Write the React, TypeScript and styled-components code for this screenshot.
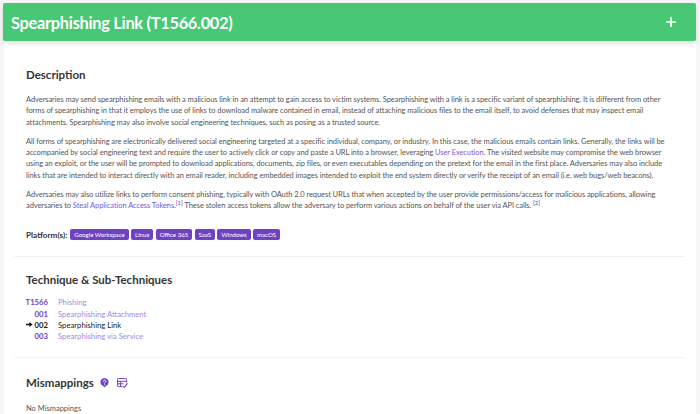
import styled, { createGlobalStyle } from "styled-components";

const GlobalStyle = createGlobalStyle`
  html, body {
    margin: 0;
    padding: 0;
    background: #f7f7f8;
    font-family: "Lato", "Open Sans", sans-serif;
  }
`;

const platforms = ["Google Workspace", "Linux", "Office 365", "SaaS", "Windows", "macOS"];

const techniques = [
  { id: "T1566", name: "Phishing", parent: true },
  { id: "001", name: "Spearphishing Attachment" },
  { id: "002", name: "Spearphishing Link", current: true },
  { id: "003", name: "Spearphishing via Service" },
];

const App = () => {
  return (
    <Page>
      <GlobalStyle />
      <Banner>
        <Title>Spearphishing Link (T1566.002)</Title>
        <PlusIcon viewBox="0 0 12 12">
          <path d="M6 1v10M1 6h10" stroke="#fff" strokeWidth="1.7" fill="none" />
        </PlusIcon>
      </Banner>
      <Card>
        <Section>
          <Heading>Description</Heading>
          <Para>
            Adversaries may send spearphishing emails with a malicious link in an attempt to gain access to victim systems. Spearphishing with a link is a specific variant of spearphishing. It is different from other<br />
            forms of spearphishing in that it employs the use of links to download malware contained in email, instead of attaching malicious files to the email itself, to avoid defenses that may inspect email<br />
            attachments. Spearphishing may also involve social engineering techniques, such as posing as a trusted source.
          </Para>
          <Para>
            All forms of spearphishing are electronically delivered social engineering targeted at a specific individual, company, or industry. In this case, the malicious emails contain links. Generally, the links will be<br />
            accompanied by social engineering text and require the user to actively click or copy and paste a URL into a browser, leveraging <TextLink>User Execution</TextLink>. The visited website may compromise the web browser<br />
            using an exploit, or the user will be prompted to download applications, documents, zip files, or even executables depending on the pretext for the email in the first place. Adversaries may also include<br />
            links that are intended to interact directly with an email reader, including embedded images intended to exploit the end system directly or verify the receipt of an email (i.e. web bugs/web beacons).
          </Para>
          <Para>
            Adversaries may also utilize links to perform consent phishing, typically with OAuth 2.0 request URLs that when accepted by the user provide permissions/access for malicious applications, allowing<br />
            adversaries to <TextLink>Steal Application Access Tokens</TextLink>.<Ref>[1]</Ref> These stolen access tokens allow the adversary to perform various actions on behalf of the user via API calls. <Ref>[2]</Ref>
          </Para>
          <PlatformRow>
            <PlatformLabel>Platform(s):</PlatformLabel>
            {platforms.map(p => <Badge key={p}>{p}</Badge>)}
          </PlatformRow>
        </Section>
        <TechSection>
          <TechHeading>Technique &amp; Sub-Techniques</TechHeading>
          <TechList>
            {techniques.map(t => (
              <TechRow key={t.id}>
                <TechId $current={t.current}>
                  {t.current && <Arrow viewBox="0 0 8 6"><path d="M0 2.2h4V0l4 3-4 3V3.8H0z" fill="#111" /></Arrow>}
                  {t.id}
                </TechId>
                <TechName $current={t.current}>{t.name}</TechName>
              </TechRow>
            ))}
          </TechList>
        </TechSection>
        <LastSection>
          <HeadingRow>
            <Heading>Mismappings</Heading>
            <HelpIcon viewBox="0 0 10 11">
              <path d="M5 0.3a4.5 4.5 0 0 1 4.5 4.5c0 2.1-1.6 3.6-3.4 4.2L5 10.6 3.9 9C2 8.4 0.5 6.9 0.5 4.8A4.5 4.5 0 0 1 5 0.3z" fill="#6f42c1" />
              <path d="M3.5 3.9c0-2 3-2 3 0 0 1.2-1.5 1.1-1.5 2.2" stroke="#fff" strokeWidth="1" fill="none" />
              <circle cx="5" cy="7.5" r="0.6" fill="#fff" />
            </HelpIcon>
            <TableIcon viewBox="0 0 12 11">
              <path d="M6 9.5H1.5a1 1 0 0 1-1-1v-7a1 1 0 0 1 1-1h8a1 1 0 0 1 1 1V5M.5 3.6h10M.5 6.4H7M4 3.6v5.9" stroke="#6f42c1" strokeWidth="1.1" fill="none" />
              <path d="M6.8 9.3 8 10.3 11.5 6" stroke="#6f42c1" strokeWidth="1.2" fill="none" />
            </TableIcon>
          </HeadingRow>
          <Muted>No Mismappings</Muted>
        </LastSection>
      </Card>
    </Page>
  );
};

export default App;

const Page = styled.div`
  width: 700px;
  height: 414px;
  overflow: hidden;
  padding: 3px 4px 0 3px;
  box-sizing: border-box;
`;

const Banner = styled.div`
  display: flex;
  align-items: center;
  justify-content: space-between;
  height: 38px;
  padding: 0 19px 0 8px;
  background: #48c774;
  border-radius: 2px;
  box-shadow: 0 2px 5px rgba(0, 0, 0, 0.14);
  position: relative;
`;

const Title = styled.h1`
  margin: 0;
  font-size: 16.4px;
  letter-spacing: -0.3px;
  font-weight: 700;
  color: #fff;
`;

const PlusIcon = styled.svg`
  width: 12px;
  height: 12px;
`;

const Card = styled.div`
  margin-left: 1px;
  background: #fff;
  padding: 0 11px 0 10px;
`;

const Section = styled.section`
  padding: 26px 0 16px 12px;
  border-bottom: 1px solid #f1f1f8;
`;

const TechSection = styled(Section)`
  padding-top: 15px;
  padding-bottom: 15px;
`;

const LastSection = styled(Section)`
  padding-top: 17px;
  border-bottom: none;
`;

const Heading = styled.h2`
  margin: 0 0 11px;
  font-size: 11.5px;
  line-height: 16px;
  font-weight: 700;
  color: #363636;
`;

const TechHeading = styled(Heading)`
  margin-bottom: 8px;
`;

const Para = styled.p`
  margin: 0 0 7.4px;
  font-size: 7.5px;
  letter-spacing: -0.07px;
  line-height: 11.4px;
  color: #555;
  white-space: nowrap;
`;

const TextLink = styled.span`
  color: #7e57d6;
`;

const Ref = styled.sup`
  font-size: 6px;
  line-height: 0;
  color: #5b3cc4;
`;

const PlatformRow = styled.div`
  display: flex;
  align-items: center;
  gap: 2.5px;
  margin-top: 18px;
`;

const PlatformLabel = styled.span`
  font-size: 8.2px;
  font-weight: 700;
  color: #333;
  margin-right: 0.5px;
`;

const Badge = styled.span`
  padding: 0 3.9px;
  height: 11px;
  line-height: 11px;
  font-size: 6.1px;
  color: #fff;
  background: #6f42c1;
  border-radius: 2px;
`;

const TechList = styled.div`
  display: flex;
  flex-direction: column;
`;

const TechRow = styled.div`
  display: flex;
  align-items: center;
  height: 11.4px;
  font-size: 7.7px;
`;

const TechId = styled.span<{ $current?: boolean }>`
  width: 22px;
  text-align: right;
  font-weight: 700;
  color: ${p => (p.$current ? "#222" : "#6f42c1")};
  display: flex;
  justify-content: flex-end;
  align-items: center;
  gap: 2px;
  flex: none;
`;

const TechName = styled.span<{ $current?: boolean }>`
  margin-left: 10px;
  color: ${p => (p.$current ? "#222" : "#a58ae0")};
`;

const Arrow = styled.svg`
  width: 7px;
  height: 5px;
`;

const HeadingRow = styled.div`
  display: flex;
  align-items: flex-start;
`;

const HelpIcon = styled.svg`
  width: 9px;
  height: 10px;
  margin: 3px 0 0 6px;
`;

const TableIcon = styled.svg`
  width: 11px;
  height: 10px;
  margin: 3px 0 0 8px;
`;

const Muted = styled.div`
  margin-top: 2px;
  font-size: 7.5px;
  color: #555;
`;
